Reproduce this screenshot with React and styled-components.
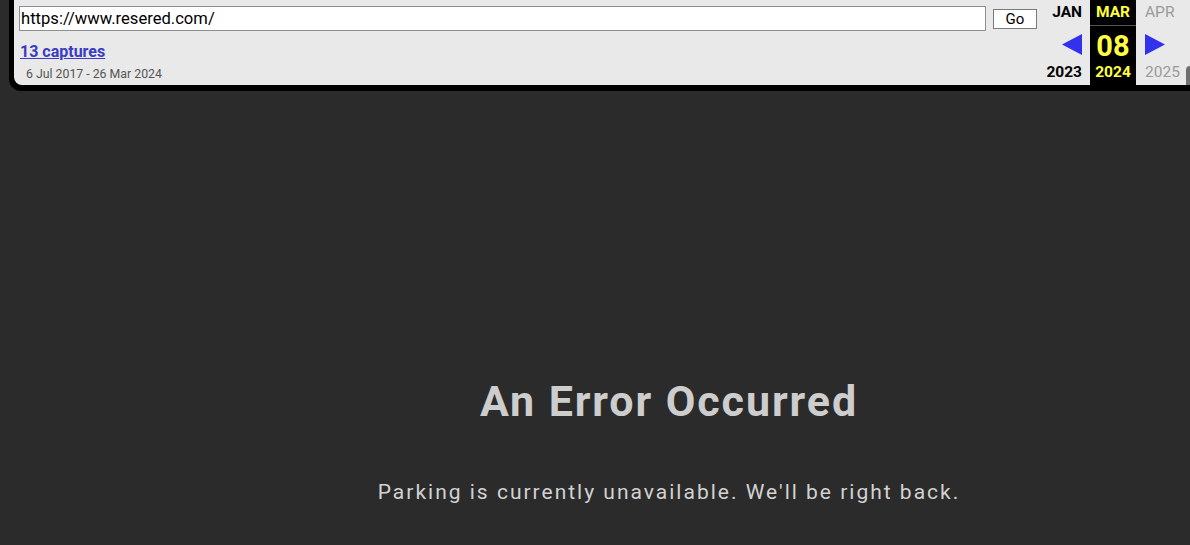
import React from "react";
import styled, { createGlobalStyle } from "styled-components";

const Global = createGlobalStyle`
  html, body { margin: 0; padding: 0; background: #2b2b2b; }
  body { font-family: Roboto, "Liberation Sans", Arial, sans-serif; overflow: hidden; }
`;

const Page = styled.div`
  width: 1190px;
  height: 545px;
  background: #2b2b2b;
  display: flex;
  flex-direction: column;
`;

const Frame = styled.div`
  margin-left: 9px;
  background: #000;
  padding: 0 0 6px 5px;
  border-bottom-left-radius: 12px;
`;

const Toolbar = styled.div`
  height: 85px;
  background: #e9e9e9;
  border-bottom-left-radius: 8px;
  display: flex;
  position: relative;
`;

const LeftSide = styled.div`
  flex: 1;
  padding: 6px 0 0 5px;
  display: flex;
  flex-direction: column;
`;

const UrlRow = styled.div`
  display: flex;
  align-items: center;
  gap: 7px;
`;

const UrlInput = styled.div`
  width: 964px;
  height: 23px;
  background: #fff;
  border: 1px solid #8f8f8f;
  font-size: 16.6px;
  line-height: 24px;
  padding-left: 1px;
  color: #000;
`;

const GoButton = styled.div`
  width: 42px;
  height: 18px;
  margin-top: 1px;
  background: #fff;
  border: 1px solid #7a7a7a;
  font-size: 15px;
  line-height: 19px;
  text-align: center;
  color: #000;
`;

const Captures = styled.a`
  margin-top: 11px;
  margin-left: 1px;
  font-size: 16px;
  font-weight: 700;
  color: #3b3bc4;
  text-decoration: underline;
  line-height: 19px;
`;

const Range = styled.div`
  margin-top: 6px;
  margin-left: 7px;
  font-size: 12.3px;
  color: #555;
  line-height: 14px;
`;

const Calendar = styled.div`
  display: flex;
  margin-right: 8px;
`;

const MonthCol = styled.div`
  width: 46px;
  display: flex;
  flex-direction: column;
  align-items: ${p => p.$align};
  background: ${p => (p.$current ? "#000" : "transparent")};
  color: ${p => (p.$current ? "#ffff40" : p.$dim ? "#9a9a9a" : "#000")};
  font-weight: ${p => (p.$dim ? 400 : 700)};
  padding: ${p => (p.$align === "flex-end" ? "0 8px 0 0" : p.$align === "flex-start" ? "0 0 0 9px" : "0")};
  box-sizing: border-box;
`;

const Month = styled.div`
  font-size: 15.5px;
  line-height: 19px;
  height: 22px;
  padding-top: 3px;
  width: 100%;
  text-align: ${p => p.$align};
  border-bottom: ${p => (p.$current ? "1px solid #555" : "1px solid transparent")};
`;

const Middle = styled.div`
  height: 37px;
  display: flex;
  align-items: center;
  justify-content: ${p => p.$justify || "center"};
  width: 100%;
`;

const Day = styled.div`
  font-size: 29px;
  line-height: 30px;
  margin-top: 2px;
`;

const Year = styled.div`
  font-size: 15.5px;
  line-height: 18px;
  width: 100%;
  text-align: ${p => p.$align};
`;

const Scroller = styled.div`
  position: absolute;
  right: 0;
  bottom: 0;
  width: 4px;
  height: 19px;
  background: #6f6f6f;
  border-top-left-radius: 4px;
`;

const Main = styled.div`
  flex: 1;
  display: flex;
  flex-direction: column;
  align-items: center;
  padding-left: 148px;
  padding-top: 284px;
`;

const Title = styled.h1`
  margin: 0;
  font-size: 43px;
  font-weight: 700;
  letter-spacing: 1.9px;
  color: #cdcdcd;
  line-height: 52px;
`;

const Message = styled.p`
  margin: 52px 0 0;
  font-size: 21px;
  letter-spacing: 2px;
  color: #d2d2d2;
  line-height: 26px;
`;

const Arrow = ({ dir }) => (
  <svg width="20" height="21" viewBox="0 0 20 21">
    {dir === "left" ? (
      <polygon points="20,0 20,21 0,10.5" fill="#3232ee" />
    ) : (
      <polygon points="0,0 0,21 20,10.5" fill="#3232ee" />
    )}
  </svg>
);

const App = () => {
  return (
    <Page>
      <Global />
      <Frame>
        <Toolbar>
          <LeftSide>
            <UrlRow>
              <UrlInput>https://www.resered.com/</UrlInput>
              <GoButton>Go</GoButton>
            </UrlRow>
            <Captures href="#">13 captures</Captures>
            <Range>6 Jul 2017 - 26 Mar 2024</Range>
          </LeftSide>
          <Calendar>
            <MonthCol $align="flex-end">
              <Month $align="right">JAN</Month>
              <Middle $justify="flex-end">
                <Arrow dir="left" />
              </Middle>
              <Year $align="right">2023</Year>
            </MonthCol>
            <MonthCol $current $align="center">
              <Month $current $align="center">MAR</Month>
              <Middle>
                <Day>08</Day>
              </Middle>
              <Year $align="center">2024</Year>
            </MonthCol>
            <MonthCol $dim $align="flex-start">
              <Month $align="left">APR</Month>
              <Middle $justify="flex-start">
                <Arrow dir="right" />
              </Middle>
              <Year $align="left">2025</Year>
            </MonthCol>
          </Calendar>
          <Scroller />
        </Toolbar>
      </Frame>
      <Main>
        <Title>An Error Occurred</Title>
        <Message>Parking is currently unavailable. We'll be right back.</Message>
      </Main>
    </Page>
  );
};

export default App;
